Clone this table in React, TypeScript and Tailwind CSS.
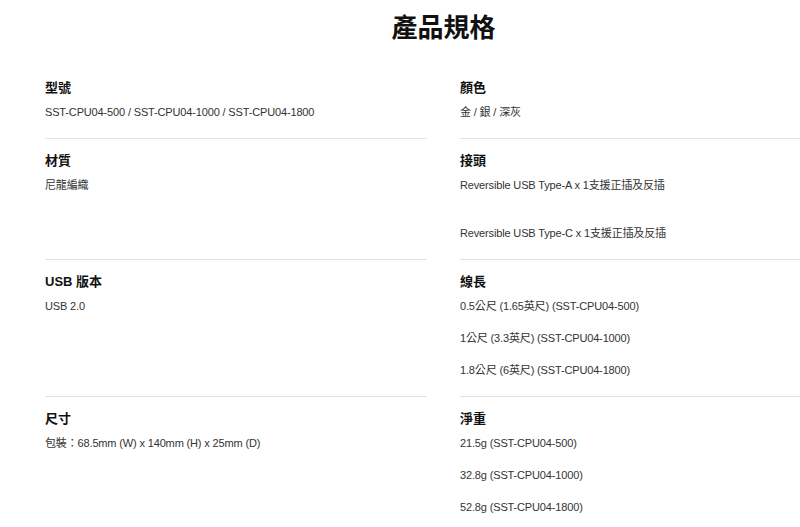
import React from "react";

type Cell = { title: string; values: string[]; gaps?: number[] };

const rows: [Cell, Cell][] = [
  [
    { title: "型號", values: ["SST-CPU04-500 / SST-CPU04-1000 / SST-CPU04-1800"] },
    { title: "顏色", values: ["金 / 銀 / 深灰"] },
  ],
  [
    { title: "材質", values: ["尼龍編織"] },
    {
      title: "接頭",
      values: ["Reversible USB Type-A x 1支援正插及反插", "Reversible USB Type-C x 1支援正插及反插"],
      gaps: [0, 1],
    },
  ],
  [
    { title: "USB 版本", values: ["USB 2.0"] },
    {
      title: "線長",
      values: ["0.5公尺 (1.65英尺) (SST-CPU04-500)", "1公尺 (3.3英尺) (SST-CPU04-1000)", "1.8公尺 (6英尺) (SST-CPU04-1800)"],
    },
  ],
  [
    { title: "尺寸", values: ["包裝：68.5mm (W) x 140mm (H) x 25mm (D)"] },
    {
      title: "淨重",
      values: ["21.5g (SST-CPU04-500)", "32.8g (SST-CPU04-1000)", "52.8g (SST-CPU04-1800)"],
    },
  ],
];

function SpecCell({ cell }: { cell: Cell }) {
  return (
    <div className="border-b border-[#e3e3e3] pt-[12px] pb-[12px]">
      <div className="text-[13px] leading-[20px] font-bold text-[#111]">{cell.title}</div>
      {cell.values.map((v, i) => (
        <div
          key={i}
          className={
            "text-[11px] leading-[28px] tracking-[-0.15px] text-[#333] " +
            (i === 0 ? "mt-0" : cell.gaps && cell.gaps[i] === 1 ? "mt-[20px]" : "mt-[4px]")
          }
        >
          {v}
        </div>
      ))}
    </div>
  );
}

export default function App() {
  return (
    <div
      className="w-[800px] h-[527px] overflow-hidden bg-white"
      style={{ fontFamily: '"Liberation Sans", Arial, "Noto Sans CJK TC", sans-serif' }}
    >
      <div className="ml-[45px] w-[797px]">
        <h1
          className="text-center text-[26px] leading-[36px] font-bold text-[#111] pt-[8px] mb-[22px]"
          style={{ fontFamily: '"Noto Sans CJK TC", sans-serif' }}
        >
          產品規格
        </h1>
        <div className="grid grid-cols-[382px_382px] gap-x-[33px]">
          {rows.map(([a, b], i) => (
            <React.Fragment key={i}>
              <SpecCell cell={a} />
              <SpecCell cell={b} />
            </React.Fragment>
          ))}
        </div>
      </div>
    </div>
  );
}
